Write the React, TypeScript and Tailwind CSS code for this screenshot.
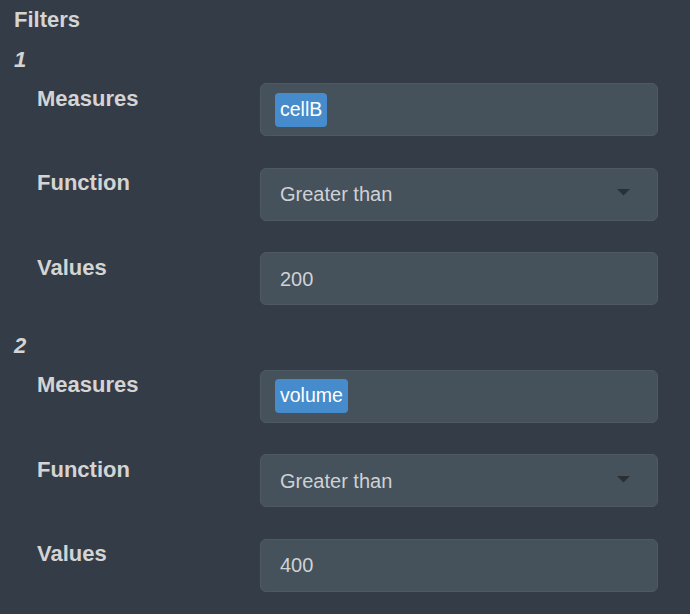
import React from 'react';

interface Filter {
    id: number;
    measure: string;
    func: string;
    value: string;
}

const filters: Filter[] = [
    { id: 1, measure: 'cellB', func: 'Greater than', value: '200' },
    { id: 2, measure: 'volume', func: 'Greater than', value: '400' },
];

const boxClass =
    'flex-1 h-[53px] flex items-center rounded-[6px] border border-[#4e5963] bg-[#45515b]';

const Row: React.FC<{ label: string; children: React.ReactNode }> = ({ label, children }) => (
    <div className="flex items-start">
        <div className="w-[246px] pl-[23px] mt-[2.5px] text-[22px] leading-[26px] font-bold text-[#d4d4d4]">
            {label}
        </div>
        <div className={boxClass}>{children}</div>
    </div>
);

const App: React.FC = () => {
    return (
        <div className="min-h-screen bg-[#343d47] pl-[14px] pr-[32px] pt-[7px] font-['Liberation_Sans',Arial,sans-serif]">
            <h1 className="text-[22px] leading-[26px] font-bold text-[#d4d4d4]">Filters</h1>
            <div className="flex flex-col gap-[28px] mt-[14px]">
                {filters.map((filter) => (
                    <div key={filter.id}>
                        <h2 className="text-[22px] leading-[26px] font-bold italic text-[#d4d4d4]">
                            {filter.id}
                        </h2>
                        <div className="flex flex-col gap-[31.5px] mt-[10.3px]">
                            <Row label="Measures">
                                <div className="pl-[14px]">
                                    <span className="inline-flex items-center h-[34px] px-[5px] rounded-[4px] bg-[#468ccc] text-white text-[19.5px]">
                                        {filter.measure}
                                    </span>
                                </div>
                            </Row>
                            <Row label="Function">
                                <div className="flex-1 flex items-center justify-between pl-[19px] pr-[27px]">
                                    <span className="text-[20px] text-[#cfd2d5]">{filter.func}</span>
                                    <svg width="13" height="7" viewBox="0 0 13 7" className="-mt-[3px]">
                                        <polygon points="0,0 13,0 6.5,6.5" fill="#2b3035" />
                                    </svg>
                                </div>
                            </Row>
                            <Row label="Values">
                                <span className="pl-[19px] text-[20px] text-[#cfd2d5]">{filter.value}</span>
                            </Row>
                        </div>
                    </div>
                ))}
            </div>
        </div>
    );
};

export default App;
